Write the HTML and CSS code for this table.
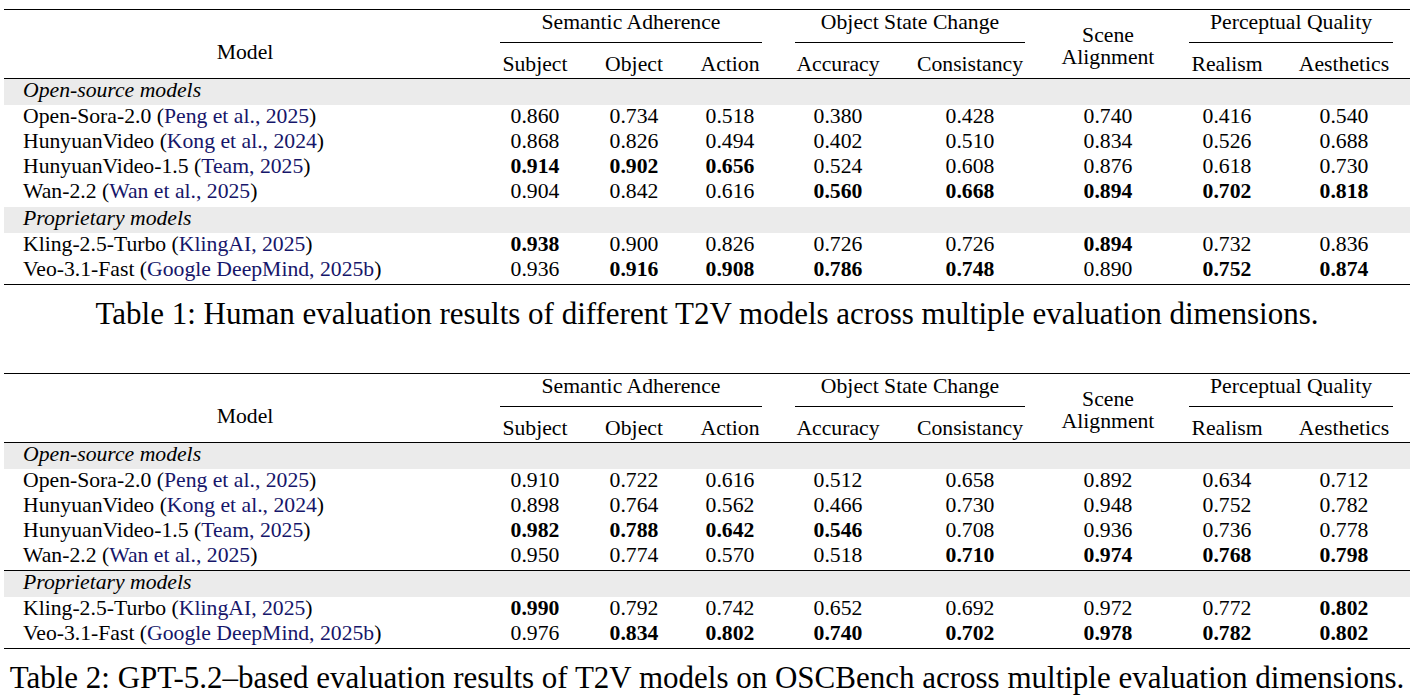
FILE: index.html
```html
<!DOCTYPE html>
<html lang="en">
<head>
<meta charset="utf-8">
<title>T2V evaluation tables</title>
<link rel="stylesheet" href="styles.css">
</head>
<body>
<main class="page">
  <section class="tbl">
    <div class="cols head">
      <div class="model-h">Model</div>
      <div class="grp grp-sa">Semantic Adherence</div>
      <div class="grp grp-osc">Object State Change</div>
      <div class="scene-h">Scene<br>Alignment</div>
      <div class="grp grp-pq">Perceptual Quality</div>
      <div class="sub">Subject</div>
      <div class="sub">Object</div>
      <div class="sub">Action</div>
      <div class="sub">Accuracy</div>
      <div class="sub">Consistancy</div>
      <div class="sub sub-r">Realism</div>
      <div class="sub">Aesthetics</div>
    </div>
    <div class="band">Open-source models</div>
    <div class="cols row"><div class="name">Open-Sora-2.0 (<a class="cite">Peng et al., 2025</a>)</div><div>0.860</div><div>0.734</div><div>0.518</div><div>0.380</div><div>0.428</div><div>0.740</div><div>0.416</div><div>0.540</div></div>
    <div class="cols row"><div class="name">HunyuanVideo (<a class="cite">Kong et al., 2024</a>)</div><div>0.868</div><div>0.826</div><div>0.494</div><div>0.402</div><div>0.510</div><div>0.834</div><div>0.526</div><div>0.688</div></div>
    <div class="cols row"><div class="name">HunyuanVideo-1.5 (<a class="cite">Team, 2025</a>)</div><div class="b">0.914</div><div class="b">0.902</div><div class="b">0.656</div><div>0.524</div><div>0.608</div><div>0.876</div><div>0.618</div><div>0.730</div></div>
    <div class="cols row"><div class="name">Wan-2.2 (<a class="cite">Wan et al., 2025</a>)</div><div>0.904</div><div>0.842</div><div>0.616</div><div class="b">0.560</div><div class="b">0.668</div><div class="b">0.894</div><div class="b">0.702</div><div class="b">0.818</div></div>
    <div class="band band-2">Proprietary models</div>
    <div class="cols row"><div class="name">Kling-2.5-Turbo (<a class="cite">KlingAI, 2025</a>)</div><div class="b">0.938</div><div>0.900</div><div>0.826</div><div>0.726</div><div>0.726</div><div class="b">0.894</div><div>0.732</div><div>0.836</div></div>
    <div class="cols row"><div class="name">Veo-3.1-Fast (<a class="cite">Google DeepMind, 2025b</a>)</div><div>0.936</div><div class="b">0.916</div><div class="b">0.908</div><div class="b">0.786</div><div class="b">0.748</div><div>0.890</div><div class="b">0.752</div><div class="b">0.874</div></div>
  </section>
  <p class="caption">Table 1: Human evaluation results of different T2V models across multiple evaluation dimensions.</p>

  <section class="tbl tbl-2">
    <div class="cols head">
      <div class="model-h">Model</div>
      <div class="grp grp-sa">Semantic Adherence</div>
      <div class="grp grp-osc">Object State Change</div>
      <div class="scene-h">Scene<br>Alignment</div>
      <div class="grp grp-pq">Perceptual Quality</div>
      <div class="sub">Subject</div>
      <div class="sub">Object</div>
      <div class="sub">Action</div>
      <div class="sub">Accuracy</div>
      <div class="sub">Consistancy</div>
      <div class="sub sub-r">Realism</div>
      <div class="sub">Aesthetics</div>
    </div>
    <div class="band">Open-source models</div>
    <div class="cols row"><div class="name">Open-Sora-2.0 (<a class="cite">Peng et al., 2025</a>)</div><div>0.910</div><div>0.722</div><div>0.616</div><div>0.512</div><div>0.658</div><div>0.892</div><div>0.634</div><div>0.712</div></div>
    <div class="cols row"><div class="name">HunyuanVideo (<a class="cite">Kong et al., 2024</a>)</div><div>0.898</div><div>0.764</div><div>0.562</div><div>0.466</div><div>0.730</div><div>0.948</div><div>0.752</div><div>0.782</div></div>
    <div class="cols row"><div class="name">HunyuanVideo-1.5 (<a class="cite">Team, 2025</a>)</div><div class="b">0.982</div><div class="b">0.788</div><div class="b">0.642</div><div class="b">0.546</div><div>0.708</div><div>0.936</div><div>0.736</div><div>0.778</div></div>
    <div class="cols row"><div class="name">Wan-2.2 (<a class="cite">Wan et al., 2025</a>)</div><div>0.950</div><div>0.774</div><div>0.570</div><div>0.518</div><div class="b">0.710</div><div class="b">0.974</div><div class="b">0.768</div><div class="b">0.798</div></div>
    <div class="band band-2 band-ruled">Proprietary models</div>
    <div class="cols row"><div class="name">Kling-2.5-Turbo (<a class="cite">KlingAI, 2025</a>)</div><div class="b">0.990</div><div>0.792</div><div>0.742</div><div>0.652</div><div>0.692</div><div>0.972</div><div>0.772</div><div class="b">0.802</div></div>
    <div class="cols row"><div class="name">Veo-3.1-Fast (<a class="cite">Google DeepMind, 2025b</a>)</div><div>0.976</div><div class="b">0.834</div><div class="b">0.802</div><div class="b">0.740</div><div class="b">0.702</div><div class="b">0.978</div><div class="b">0.782</div><div class="b">0.802</div></div>
  </section>
  <p class="caption">Table 2: GPT-5.2–based evaluation results of T2V models on OSCBench across multiple evaluation dimensions.</p>
</main>
</body>
</html>
```

FILE: styles.css
```css
html, body {
  margin: 0;
  padding: 0;
  background: #ffffff;
}

body {
  font-family: "Liberation Serif", "Times New Roman", serif;
  color: #000000;
}

.page {
  width: 1406px;
  padding: 9px 8px 0 4px;
}

.tbl {
  border-top: 1px solid #000;
  border-bottom: 1px solid #000;
  padding-bottom: 1px;
  font-size: 21.7px;
}

.tbl-2 {
  margin-top: 41px;
}

.cols {
  display: grid;
  grid-template-columns: 482px 98px 100px 92px 124px 140px 136px 102px 132px;
}

.head {
  grid-template-rows: 33px 35px;
  border-bottom: 1px solid #000;
  line-height: 22px;
  text-align: center;
}

.model-h {
  grid-column: 1;
  grid-row: 1 / 3;
  padding-top: 31px;
}

.grp {
  grid-row: 1;
  padding-top: 1px;
  padding-bottom: 9px;
  border-bottom: 1px solid #000;
  margin: 0 14px;
}

.grp-sa {
  grid-column: 2 / 5;
}

.grp-osc {
  grid-column: 5 / 7;
  margin: 0 15px 0 19px;
}

.grp-pq {
  grid-column: 8 / 10;
  margin: 0 17px 0 13px;
}

.scene-h {
  grid-column: 7;
  grid-row: 1 / 3;
  padding-top: 14px;
}

.sub {
  grid-row: 2;
  padding-top: 10px;
}

.sub-r {
  grid-column: 8;
}

.band {
  background: #ebebeb;
  font-style: italic;
  line-height: 22px;
  padding: 0 0 4px 19px;
}

.band-2 {
  margin-top: 2px;
}

.band-ruled {
  margin-top: 1px;
  border-top: 1px solid #000;
}

.row {
  line-height: 22px;
  padding-bottom: 3px;
  text-align: center;
}

.row .name {
  text-align: left;
  padding-left: 19px;
  white-space: nowrap;
}

.b {
  font-weight: bold;
}

.cite {
  color: #16166a;
  text-decoration: none;
}

.caption {
  margin: 11px 0 0 0;
  font-size: 31px;
  line-height: 36px;
  text-align: center;
  white-space: nowrap;
}
```
